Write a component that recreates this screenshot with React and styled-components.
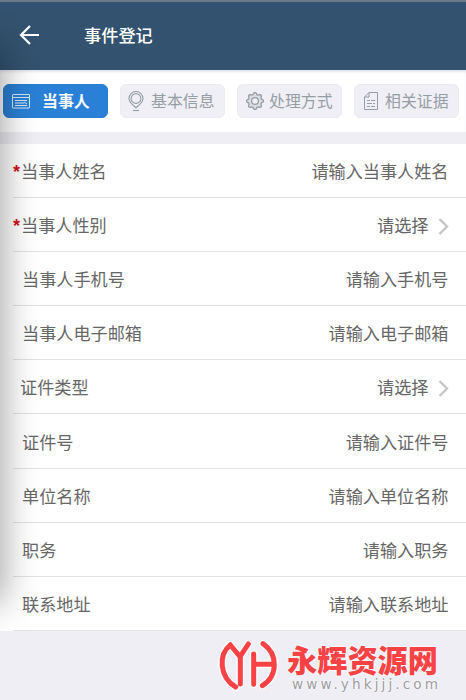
import React from "react";
import styled, { createGlobalStyle } from "styled-components";

const Global = createGlobalStyle`
  * { box-sizing: border-box; }
  body { margin: 0; background: #efeef4; font-family: "Noto Sans CJK SC", sans-serif; }
`;

const Screen = styled.div`
  position: relative;
  width: 466px;
  height: 700px;
  overflow: hidden;
  display: flex;
  flex-direction: column;
  background: #efeef4;
`;

const Header = styled.header`
  height: 70px;
  flex: none;
  display: flex;
  align-items: center;
  padding: 0 0 2px 19px;
  gap: 44px;
  background: #33526f;
  border-top: 2px solid #6c7a88;
`;

const Title = styled.h1`
  margin: 0;
  font-size: 17.2px;
  line-height: 24px;
  font-weight: 500;
  color: #fff;
`;

const Tabs = styled.nav`
  height: 62px;
  flex: none;
  display: flex;
  gap: 12px;
  padding: 14px 0 0 3px;
  background: #fff;
  box-shadow: inset 0 3px 3px -1px #e2e4ec;
`;

const Tab = styled.button`
  width: 105px;
  height: 34px;
  flex: none;
  display: flex;
  align-items: center;
  gap: ${(p) => p.$gap || 7}px;
  padding: 0 0 1px ${(p) => p.$inset || 7}px;
  border: 1px solid ${(p) => (p.$active ? "#2a7dd0" : "#ecebf2")};
  border-radius: 6px;
  background: ${(p) => (p.$active ? "#2a80d6" : "#f0eff6")};
  color: ${(p) => (p.$active ? "#f2f8fe" : "#969da5")};
  font-family: inherit;
  font-size: 15.9px;
  line-height: 22px;
  font-weight: ${(p) => (p.$active ? 700 : 400)};
  white-space: nowrap;
  svg { flex: none; margin-top: 1px; }
`;

const Form = styled.main`
  flex: none;
  margin-top: 12px;
  padding-left: 13px;
  background: #fff;
`;

const Row = styled.div`
  height: 54.1px;
  display: flex;
  align-items: center;
  justify-content: space-between;
  padding: 1px 17.5px 0 0;
  border-bottom: 1px solid #e2e2e3;
  color: #666;
  font-size: 17.15px;
  line-height: 24px;
`;

const Label = styled.label`
  display: flex;
  padding-left: ${(p) => p.$indent}px;
`;

const Star = styled.span`
  width: 8px;
  height: 24px;
  line-height: 27px;
  font-family: "Liberation Sans", sans-serif;
  font-size: 18px;
  font-weight: 700;
  color: #d0141c;
`;

const Value = styled.span`
  display: flex;
  align-items: center;
  gap: 9px;
  svg { margin-top: 3px; }
`;

const EdgeShadow = styled.div`
  position: absolute;
  left: -30px;
  top: 48px;
  width: 30px;
  height: 554px;
  box-shadow: 0 0 36px 1px rgba(0, 0, 0, 0.42);
  pointer-events: none;
`;

const ShadowClip = styled.div`
  position: absolute;
  inset: 0 0 69px 0;
  overflow: hidden;
  pointer-events: none;
`;

const Watermark = styled.div`
  position: absolute;
  left: 214px;
  top: 634px;
  display: flex;
  gap: 3px;
`;

const Brand = styled.div`
  display: flex;
  flex-direction: column;
  gap: 2px;
  padding-top: 10px;
`;

const BrandName = styled.div`
  font-size: 30.2px;
  line-height: 30px;
  font-weight: 900;
  color: #f84346;
  white-space: nowrap;
  text-shadow: 0 0 2px #fff, 0 0 2px #fff, 0 0 2px #fff;
`;

const BrandUrl = styled.div`
  padding-left: 5px;
  font-family: "DejaVu Sans", sans-serif;
  font-size: 13.6px;
  line-height: 16px;
  letter-spacing: 3.1px;
  color: #9c9ca0;
  white-space: nowrap;
  text-shadow: 0 0 2px #fff, 0 0 2px #fff;
`;

const BackIcon = () => (
  <svg width="21" height="20" viewBox="0 0 21 20" fill="none" stroke="#fff" strokeWidth="2.2">
    <path d="M11 1 2 10l9 9M2 10h18" />
  </svg>
);

const CardIcon = () => (
  <svg width="18" height="15" viewBox="0 0 18 15" fill="none" stroke="#d3e8fb" strokeWidth="1">
    <rect x=".5" y=".5" width="17" height="13.5" rx=".5" />
    <path d="M1 3.5h16M3 6.5h12M3 9h9M12 8l3 2M3 11.5h12" />
  </svg>
);

const PinIcon = () => (
  <svg width="16" height="21" viewBox="0 0 16 21" fill="none" stroke="#969da5" strokeWidth="1.1">
    <path d="M8 17C6 14.500 1 12 1 7.500a7 7 0 0 1 14 0C15 12 10 14.500 8 17Z" />
    <circle cx="8" cy="7.500" r="4.900" />
    <path d="M5 19.500h6" />
  </svg>
);

const teeth = Array.from({ length: 64 }, (_, i) => {
  const a = (i / 64) * Math.PI * 2;
  const r = 7.5 + 0.9 * Math.tanh(2.5 * Math.cos(a * 8));
  return `${(9 + r * Math.sin(a)).toFixed(2)},${(9 - r * Math.cos(a)).toFixed(2)}`;
}).join(" ");

const GearIcon = () => (
  <svg width="18" height="18" viewBox="0 0 18 18" fill="none" stroke="#969da5" strokeWidth="1.3">
    <polygon points={teeth} fill="#dcdee4" strokeLinejoin="round" />
    <circle cx="9" cy="9" r="3.4" fill="#f0eff6" />
  </svg>
);

const DocIcon = () => (
  <svg width="14" height="18" viewBox="0 0 14 18" fill="none" stroke="#969da5" strokeWidth="1">
    <path d="M5 .5h8.500v17H.500V5ZM5 .5V5H.500" />
    <path d="M3 8.500h3M7 8.500h4M3 11.500h5M9 11.500h2M3 14.500h3M7 14.500h4" />
  </svg>
);

const Chevron = () => (
  <svg width="11" height="17" viewBox="0 0 11 17" fill="none" stroke="#c6c6c8" strokeWidth="2.400">
    <path d="m1.500 1 7.500 7.500L1.500 16" />
  </svg>
);

const LogoPaths = () => (
  <>
    <path d="M49 33C13 61 15 129 65 159" />
    <path d="m49 33 29 35 25-38" />
    <path d="M79 65v85" />
    <path d="M119 60v91M119 91h58" />
    <path d="M147 29c46 32 45 96-2 126" />
  </>
);

const Logo = () => (
  <svg width="70" height="60" viewBox="0 0 210 180" fill="none" strokeLinejoin="round" strokeLinecap="round">
    <g stroke="#fff" strokeOpacity=".8" strokeWidth="23"><LogoPaths /></g>
    <g stroke="#f84346" strokeWidth="15"><LogoPaths /></g>
  </svg>
);

const fields = [
  { label: "当事人姓名", value: "请输入当事人姓名", required: true, indent: 0 },
  { label: "当事人性别", value: "请选择", required: true, select: true, indent: 0 },
  { label: "当事人手机号", value: "请输入手机号", indent: 9 },
  { label: "当事人电子邮箱", value: "请输入电子邮箱", indent: 9 },
  { label: "证件类型", value: "请选择", select: true, indent: 7 },
  { label: "证件号", value: "请输入证件号", indent: 9 },
  { label: "单位名称", value: "请输入单位名称", indent: 9 },
  { label: "职务", value: "请输入职务", indent: 9 },
  { label: "联系地址", value: "请输入联系地址", indent: 9 },
];

export default function App() {
  return (
    <Screen>
      <Global />
      <Header>
        <BackIcon />
        <Title>事件登记</Title>
      </Header>
      <Tabs>
        <Tab $active $inset={8} $gap={12}><CardIcon />当事人</Tab>
        <Tab $inset={7} $gap={7}><PinIcon />基本信息</Tab>
        <Tab $inset={8} $gap={5}><GearIcon />处理方式</Tab>
        <Tab $inset={9} $gap={7}><DocIcon />相关证据</Tab>
      </Tabs>
      <Form>
        {fields.map((f) => (
          <Row key={f.label}>
            <Label $indent={f.indent}>
              {f.required && <Star>*</Star>}
              {f.label}
            </Label>
            <Value>
              {f.value}
              {f.select && <Chevron />}
            </Value>
          </Row>
        ))}
      </Form>
      <ShadowClip>
        <EdgeShadow />
      </ShadowClip>
      <Watermark>
        <Logo />
        <Brand>
          <BrandName>永辉资源网</BrandName>
          <BrandUrl>www.yhkjjj.com</BrandUrl>
        </Brand>
      </Watermark>
    </Screen>
  );
}
